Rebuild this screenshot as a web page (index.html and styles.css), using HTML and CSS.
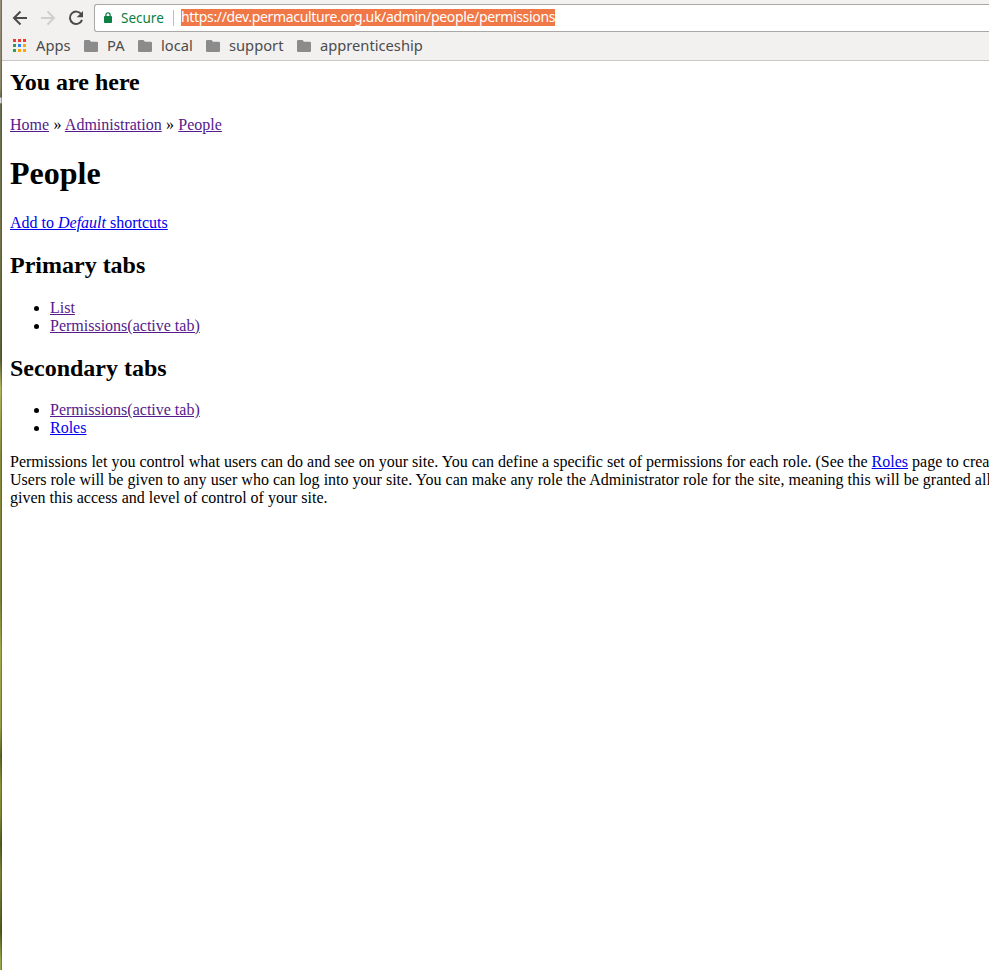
FILE: index.html
```
<!DOCTYPE html>
<html lang="en">
<head>
<meta charset="utf-8">
<title>People</title>
<link rel="stylesheet" href="styles.css">
</head>
<body>
<div class="desktop-edge"></div>
<div class="window">
  <header class="chrome">
    <div class="toolbar">
      <svg class="nav back" width="16" height="16" viewBox="0 0 16 16"><path d="M15 8H2.500M8.500 1.500L2 8l6.500 6.500"/></svg>
      <svg class="nav forward" width="16" height="16" viewBox="0 0 16 16"><path d="M1 8h12.500M7.500 1.500L14 8l-6.500 6.500"/></svg>
      <svg class="nav reload" width="16" height="16" viewBox="0 0 16 16"><path d="M13.400 4.500A6.200 6.200 0 1 0 14 9.800"/><path class="tip" d="M15 1v6.300H8.700z"/></svg>
      <div class="omnibox">
        <svg class="lock" width="8" height="11" viewBox="0 0 8 11"><path class="shackle" d="M1.900 5V2.900a2.100 2.100 0 0 1 4.200 0V5"/><rect y="4" width="8" height="7" rx=".8"/></svg>
        <span class="secure">Secure</span>
        <span class="divider"></span>
        <span class="url">https://dev.permaculture.org.uk/admin/people/permissions</span>
      </div>
    </div>
    <nav class="bookmarks">
      <svg class="apps-icon" width="13" height="13" viewBox="0 0 13 13" shape-rendering="crispEdges">
        <path fill="#ee3b2f" d="M0 0h3v3H0zM5 0h3v3H5zM10 0h3v3h-3z"/>
        <path fill="#2f9d58" d="M0 5h3v3H0zM0 10h3v3H0z"/>
        <path fill="#2a84f5" d="M5 5h3v3H5z"/>
        <path fill="#f9a60a" d="M10 5h3v3h-3zM5 10h3v3H5zM10 10h3v3h-3z"/>
      </svg>
      <span class="label apps">Apps</span>
      <svg class="folder" width="14" height="12" viewBox="0 0 14 12"><path d="M1.200 0h4.300L7 1.700h5.800Q14 1.700 14 2.900v7.900Q14 12 12.800 12H1.200Q0 12 0 10.800V1.200Q0 0 1.200 0z"/></svg>
      <span class="label pa">PA</span>
      <svg class="folder" width="14" height="12" viewBox="0 0 14 12"><path d="M1.200 0h4.300L7 1.700h5.800Q14 1.700 14 2.900v7.900Q14 12 12.800 12H1.200Q0 12 0 10.800V1.200Q0 0 1.200 0z"/></svg>
      <span class="label local">local</span>
      <svg class="folder" width="14" height="12" viewBox="0 0 14 12"><path d="M1.200 0h4.300L7 1.700h5.800Q14 1.700 14 2.900v7.900Q14 12 12.800 12H1.200Q0 12 0 10.800V1.200Q0 0 1.200 0z"/></svg>
      <span class="label support">support</span>
      <svg class="folder" width="14" height="12" viewBox="0 0 14 12"><path d="M1.200 0h4.300L7 1.700h5.800Q14 1.700 14 2.900v7.900Q14 12 12.800 12H1.200Q0 12 0 10.800V1.200Q0 0 1.200 0z"/></svg>
      <span class="label apprenticeship">apprenticeship</span>
    </nav>
  </header>
  <main class="page">
    <h2>You are here</h2>
    <div class="breadcrumb"><a class="visited" href="#">Home</a> » <a class="visited" href="#">Administration</a> » <a class="visited" href="#">People</a></div>
    <h1>People</h1>
    <div><a href="#">Add to <em>Default</em> shortcuts</a></div>
    <h2>Primary tabs</h2>
    <ul>
      <li><a class="visited" href="#">List</a></li>
      <li><a class="visited" href="#">Permissions(active tab)</a></li>
    </ul>
    <h2>Secondary tabs</h2>
    <ul>
      <li><a class="visited" href="#">Permissions(active tab)</a></li>
      <li><a href="#">Roles</a></li>
    </ul>
    <p>Permissions let you control what users can do and see on your site. You can define a specific set of permissions for each role. (See the <a href="#">Roles</a> page to crea<br>Users role will be given to any user who can log into your site. You can make any role the Administrator role for the site, meaning this will be granted all<br>given this access and level of control of your site.</p>
  </main>
</div>
</body>
</html>
```
FILE: styles.css
```
html, body {
  margin: 0;
  height: 100%;
  overflow: hidden;
}

body {
  display: flex;
  background: #fff;
  color: #000;
  font: 16px "Liberation Serif", serif;
}

.desktop-edge {
  flex: 0 0 2px;
  background: linear-gradient(90deg, transparent 50%, rgba(50, 50, 30, .35) 50%),
    linear-gradient(#96907a 0, #8b8568 9%, #68704c 10%, #d9dde0 10.100%, #d9dde0 10.600%, #68704c 10.700%, #747448 25%, #5a5f35 37%, #b0b562 40%, #85893c 47%, #7b8138 62%, #a1a94c 67%, #949b45 75%, #5e6426 78%, #8d943b 81%, #7f8635 84%, #545b20 87%, #7d8238 90%, #52591f 96%, #9aa54e 99%);
}

.window {
  flex: 1;
  min-width: 0;
}

.chrome {
  box-sizing: border-box;
  height: 61px;
  padding-top: 4px;
  background: #f2f1f0;
  border-bottom: 1px solid #c9c8c7;
  font-family: "Noto Sans", sans-serif;
}

.toolbar {
  display: flex;
  align-items: center;
  height: 28px;
  padding-left: 10px;
}

.nav {
  fill: none;
  stroke: #4b4b4b;
  stroke-width: 2;
}

.forward {
  margin-left: 12px;
  stroke: #cfcfce;
}

.reload {
  margin-left: 12px;
}

.tip {
  fill: #4b4b4b;
  stroke: none;
}

.omnibox {
  box-sizing: border-box;
  display: flex;
  flex: 1;
  align-items: center;
  height: 28px;
  margin-left: 10px;
  padding-left: 9px;
  background: #fff;
  border: 1px solid #a9a8a7;
  border-right: 0;
  border-radius: 3px 0 0 3px;
  white-space: nowrap;
}

.lock {
  margin-bottom: 1px;
  fill: #0b8043;
}

.shackle {
  fill: none;
  stroke: #0b8043;
  stroke-width: 1.3;
}

.secure {
  width: 52px;
  margin-left: 9px;
  color: #0b8043;
  font-size: 13.500px;
}

.divider {
  width: 1px;
  height: 16px;
  background: #bdbdbd;
}

.url {
  width: 374px;
  height: 17px;
  margin-bottom: 1px;
  margin-left: 7px;
  background: #f07746;
  color: #fff;
  font-size: 14px;
  line-height: 16px;
  letter-spacing: -.335px;
}

.bookmarks {
  display: flex;
  align-items: center;
  height: 28px;
  padding-left: 11px;
}

.apps-icon {
  margin-bottom: 1px;
}

.label {
  margin-left: 9px;
  color: #4c4c4c;
  font-size: 14.700px;
  line-height: 26px;
  padding-bottom: 2px;
  white-space: nowrap;
}

.apps { width: 48px; margin-left: 10px; }
.pa { width: 31px; }
.local { width: 45px; }
.support { width: 68px; }

.folder {
  fill: #8b8b8b;
}

.page {
  padding: 8px;
  white-space: nowrap;
}

.page h2:first-child {
  margin-top: 0;
}

.breadcrumb { word-spacing: .3px; }
.page p { word-spacing: .035px; }

a { color: #0000ee; }
a.visited { color: #551a8b; }
```
